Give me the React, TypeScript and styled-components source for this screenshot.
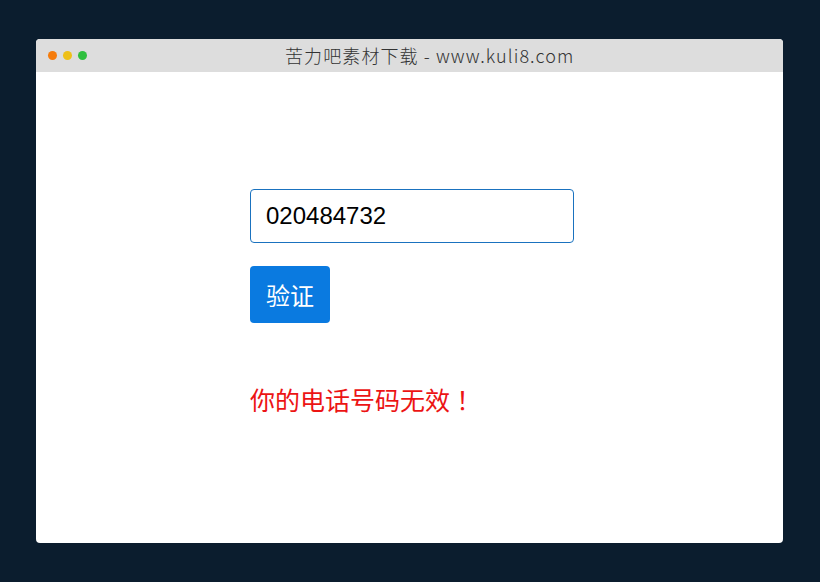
import React, { useState } from "react";
import styled, { createGlobalStyle } from "styled-components";

const Global = createGlobalStyle`
  html, body { margin: 0; padding: 0; background: #0b1d2e; }
  body { font-family: "Liberation Sans", Arial, sans-serif; }
`;

const Stage = styled.div`
  width: 820px;
  height: 582px;
  box-sizing: border-box;
  padding: 39px 37px 39px 36px;
  display: flex;
`;

const Window = styled.div`
  flex: 1;
  display: flex;
  flex-direction: column;
  background: #ffffff;
  border-radius: 4px;
  overflow: hidden;
`;

const TitleBar = styled.div`
  height: 33px;
  background: #dddddd;
  display: flex;
  align-items: center;
  padding-left: 12px;
  position: relative;
`;

const Dots = styled.div`
  display: flex;
  gap: 6px;
`;

const Dot = styled.span<{ $c: string }>`
  width: 9px;
  height: 9px;
  border-radius: 50%;
  background: ${(p) => p.$c};
`;

const Title = styled.div`
  position: absolute;
  left: 249px;
  top: 0;
  height: 31px;
  display: flex;
  align-items: center;
  font-family: "Noto Sans CJK SC", "Noto Sans", sans-serif;
  font-weight: 300;
  font-size: 18px;
  letter-spacing: 1.1px;
  color: #333333;
  white-space: nowrap;
`;

const Content = styled.div`
  flex: 1;
  padding: 117px 0 0 214px;
  display: flex;
  flex-direction: column;
  align-items: flex-start;
`;

const PhoneInput = styled.input`
  box-sizing: border-box;
  width: 324px;
  height: 54px;
  border: 1px solid #1a72bf;
  border-radius: 4px;
  padding: 0 15px;
  font-family: "Liberation Sans", Arial, sans-serif;
  font-size: 24px;
  color: #000;
  outline: none;
`;

const VerifyButton = styled.button`
  margin-top: 23px;
  box-sizing: border-box;
  height: 57px;
  padding: 0 16px;
  border: none;
  border-radius: 4px;
  background: #0a7ae0;
  color: #fff;
  font-family: "Noto Sans CJK SC", sans-serif;
  font-size: 24px;
  line-height: 1;
`;

const ErrorText = styled.div`
  margin-top: 58px;
  font-family: "Noto Sans CJK SC", sans-serif;
  font-size: 25px;
  line-height: 36px;
  color: #ec1414;
`;

const Bang = styled.span`
  font-family: "Noto Sans CJK JP", sans-serif;
`;

export default function App() {
  const [value, setValue] = useState("020484732");
  return (
    <>
      <Global />
      <Stage>
        <Window>
          <TitleBar>
            <Dots>
              <Dot $c="#f57c0c" />
              <Dot $c="#eec018" />
              <Dot $c="#2fbf3e" />
            </Dots>
            <Title>苦力吧素材下载 - www.kuli8.com</Title>
          </TitleBar>
          <Content>
            <PhoneInput value={value} onChange={(e) => setValue(e.target.value)} />
            <VerifyButton>验证</VerifyButton>
            <ErrorText>
              你的电话号码无效<Bang>！</Bang>
            </ErrorText>
          </Content>
        </Window>
      </Stage>
    </>
  );
}
